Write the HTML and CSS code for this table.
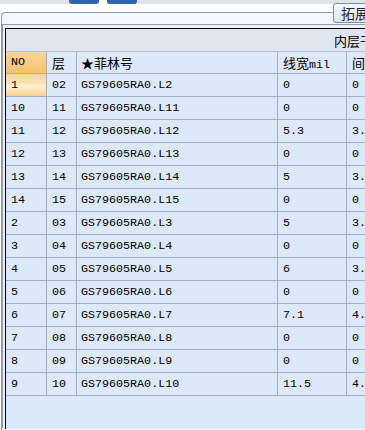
FILE: index.html
```html
<!DOCTYPE html>
<html>
<head>
<meta charset="utf-8">
<link rel="stylesheet" href="styles.css">
</head>
<body>
<div class="topbar">
  <span class="btab"></span>
  <span class="notch"></span>
  <span class="btab"></span>
</div>
<div class="panel">
  <div class="ext-tab">拓展</div>
  <div class="frame">
    <div class="grid">
      <div class="band">内层干</div>
      <div class="row head">
        <div class="cell no">NO</div>
        <div class="cell cjk">层</div>
        <div class="cell cjk">★菲林号</div>
        <div class="cell"><span class="cjk">线宽</span>mil</div>
        <div class="cell cjk">间</div>
      </div>
      <div class="row"><div class="cell sel">1</div><div class="cell">02</div><div class="cell">GS79605RA0.L2</div><div class="cell">0</div><div class="cell">0</div></div>
      <div class="row"><div class="cell">10</div><div class="cell">11</div><div class="cell">GS79605RA0.L11</div><div class="cell">0</div><div class="cell">0</div></div>
      <div class="row"><div class="cell">11</div><div class="cell">12</div><div class="cell">GS79605RA0.L12</div><div class="cell">5.3</div><div class="cell">3.</div></div>
      <div class="row"><div class="cell">12</div><div class="cell">13</div><div class="cell">GS79605RA0.L13</div><div class="cell">0</div><div class="cell">0</div></div>
      <div class="row"><div class="cell">13</div><div class="cell">14</div><div class="cell">GS79605RA0.L14</div><div class="cell">5</div><div class="cell">3.</div></div>
      <div class="row"><div class="cell">14</div><div class="cell">15</div><div class="cell">GS79605RA0.L15</div><div class="cell">0</div><div class="cell">0</div></div>
      <div class="row"><div class="cell">2</div><div class="cell">03</div><div class="cell">GS79605RA0.L3</div><div class="cell">5</div><div class="cell">3.</div></div>
      <div class="row"><div class="cell">3</div><div class="cell">04</div><div class="cell">GS79605RA0.L4</div><div class="cell">0</div><div class="cell">0</div></div>
      <div class="row"><div class="cell">4</div><div class="cell">05</div><div class="cell">GS79605RA0.L5</div><div class="cell">6</div><div class="cell">3.</div></div>
      <div class="row"><div class="cell">5</div><div class="cell">06</div><div class="cell">GS79605RA0.L6</div><div class="cell">0</div><div class="cell">0</div></div>
      <div class="row"><div class="cell">6</div><div class="cell">07</div><div class="cell">GS79605RA0.L7</div><div class="cell">7.1</div><div class="cell">4.</div></div>
      <div class="row"><div class="cell">7</div><div class="cell">08</div><div class="cell">GS79605RA0.L8</div><div class="cell">0</div><div class="cell">0</div></div>
      <div class="row"><div class="cell">8</div><div class="cell">09</div><div class="cell">GS79605RA0.L9</div><div class="cell">0</div><div class="cell">0</div></div>
      <div class="row"><div class="cell">9</div><div class="cell">10</div><div class="cell">GS79605RA0.L10</div><div class="cell">11.5</div><div class="cell">4.</div></div>
      <div class="empty"></div>
    </div>
  </div>
</div>
</body>
</html>
```

FILE: styles.css
```css
html, body {
  margin: 0;
  padding: 0;
  width: 365px;
  height: 430px;
  overflow: hidden;
  background: #ffffff;
}
body {
  font-family: "Liberation Mono", monospace;
  font-size: 11.7px;
  color: #000;
}
.cjk {
  font-family: "Noto Sans CJK SC", sans-serif;
  font-size: 13px;
}
.topbar {
  display: flex;
  height: 4px;
  background: #e1e5ea;
  padding-left: 69px;
}
.btab {
  width: 30px;
  height: 4px;
  background: #2f64b4;
  border-radius: 0 0 3px 3px;
}
.notch {
  width: 8px;
  height: 4px;
  background: #ffffff;
}
.panel {
  position: relative;
  margin-top: 8px;
  margin-left: 1px;
  border-top: 1px solid #8e9bab;
  border-left: 1px solid #8e9bab;
  border-top-left-radius: 4px;
  background: #f3f6fa;
  padding-top: 11px;
  height: 420px;
}
.ext-tab {
  position: absolute;
  left: 331px;
  top: -10px;
  width: 40px;
  height: 20px;
  box-sizing: border-box;
  border: 1px solid #7e8b99;
  border-radius: 3px 0 0 3px;
  background: linear-gradient(#f4f7fa, #dfe5ec);
  font-family: "Noto Sans CJK SC", sans-serif;
  font-size: 14px;
  line-height: 18px;
  padding-left: 7px;
  color: #1c2a3a;
}
.frame {
  border-top: 1px solid #8e9bab;
  border-left: 1px solid #8e9bab;
  padding: 3px 0 0 2px;
  background: #eef2f7;
  height: 400px;
}
.grid {
  border-top: 1px solid #000;
  border-left: 1px solid #000;
  background: #dce9fa;
  height: 400px;
  width: 420px;
}
.band {
  height: 23px;
  background: #dfe5ee;
  font-family: "Noto Sans CJK SC", sans-serif;
  font-size: 13px;
  line-height: 23px;
  padding-left: 328px;
  border-bottom: 1px solid #b6c0cc;
  box-sizing: border-box;
}
.row {
  display: grid;
  grid-template-columns: 41px 30px 201px 69px 80px;
  height: 23px;
}
.row.head {
  height: 22px;
}
.cell {
  box-sizing: border-box;
  border-right: 1px solid #a6b0bd;
  border-bottom: 1px solid #a6b0bd;
  background: #dde9f8;
  padding-left: 5px;
  line-height: 22px;
  white-space: nowrap;
  overflow: hidden;
}
.head .cell {
  line-height: 21px;
}
.cell:nth-child(3) {
  padding-left: 4px;
}
.no {
  background: linear-gradient(#f8d697, #f5c170);
}
.sel {
  background: linear-gradient(#f8d697 0%, #fbe3b8 40%, #fff1d6 55%, #f7cf8a 100%);
}
.empty {
  height: 40px;
}
```
